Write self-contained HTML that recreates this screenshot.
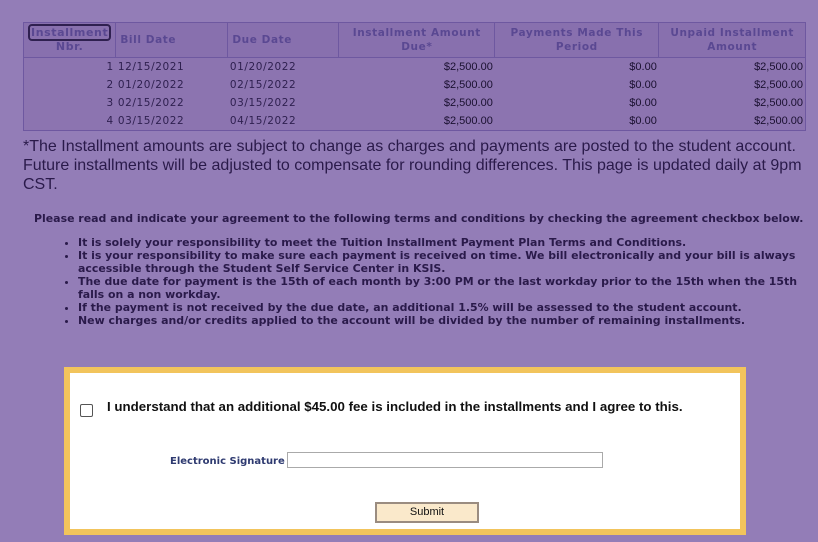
<!DOCTYPE html>
<html><head><style>
body{margin:0;width:818px;height:542px;background:#937DB7;font-family:"DejaVu Sans",Verdana,sans-serif;overflow:hidden;position:relative;color:#2a1a4a}
.t{position:absolute;left:23px;top:22px;width:783px;border-collapse:collapse;font-size:10.5px}
.t th{background:#8870AE;color:#5a4892;font-weight:bold;font-size:10.5px;letter-spacing:0.6px;border:1px solid #6e58a0;height:34px;padding:0 4px;line-height:14px}
.t td{height:18px;padding:0 2px;background:#8C74B0;color:#2f2050;letter-spacing:0.6px}
.t{border:1px solid #6e58a0}
.r{text-align:right}
.a{font-family:"Liberation Sans",Arial,sans-serif;letter-spacing:0 !important;font-size:11px;color:#1a1030 !important}
.note{position:absolute;left:23px;top:137px;width:790px;font-family:"Liberation Sans",Arial,sans-serif;font-size:16px;line-height:19px;color:#2a1a4a}
.p{position:absolute;left:34px;top:212px;font-size:10.95px;font-weight:bold;color:#2a1a4a;white-space:nowrap}
ul{position:absolute;left:60px;top:236px;margin:0;padding-left:18px;width:725px;font-size:10.95px;font-weight:bold;line-height:13px;color:#2a1a4a}
.box{position:absolute;left:64px;top:367px;width:670px;height:156px;background:#fff;border:6px solid #F2C45C}
.cb{position:absolute;left:10px;top:31px;width:11px;height:11px;border:1px solid #555;border-radius:2px}
.lbl{position:absolute;left:37px;top:26px;font-family:"Liberation Sans",Arial,sans-serif;font-weight:bold;font-size:13.3px;color:#111;white-space:nowrap}
.es{position:absolute;left:100px;top:83px;font-size:10px;font-weight:bold;color:#2e3a70}
.in{position:absolute;left:217px;top:79px;width:314px;height:14px;border:1px solid #aaa}
.btn{position:absolute;left:305px;top:129px;width:100px;height:17px;background:#FAE9CB;border:2px solid #9a8c80;font-family:"Liberation Sans",Arial,sans-serif;font-size:11px;text-align:center;line-height:17px;color:#111}
</style></head><body>
<table class="t">
<tr><th style="width:80px;font-size:11px"><span style="border:2px solid #2f2050;border-radius:4px;padding:0 1px">Installment</span><br>Nbr.</th><th style="text-align:left;width:103px">Bill Date</th><th style="text-align:left;width:102px">Due Date</th><th style="width:147px">Installment Amount Due*</th><th style="width:155px">Payments Made This Period</th><th>Unpaid Installment Amount</th></tr>
<tr><td class="r">1</td><td>12/15/2021</td><td>01/20/2022</td><td class="r a">$2,500.00</td><td class="r a">$0.00</td><td class="r a">$2,500.00</td></tr>
<tr><td class="r">2</td><td>01/20/2022</td><td>02/15/2022</td><td class="r a">$2,500.00</td><td class="r a">$0.00</td><td class="r a">$2,500.00</td></tr>
<tr><td class="r">3</td><td>02/15/2022</td><td>03/15/2022</td><td class="r a">$2,500.00</td><td class="r a">$0.00</td><td class="r a">$2,500.00</td></tr>
<tr><td class="r">4</td><td>03/15/2022</td><td>04/15/2022</td><td class="r a">$2,500.00</td><td class="r a">$0.00</td><td class="r a">$2,500.00</td></tr>
</table>
<div class="note">*The Installment amounts are subject to change as charges and payments are posted to the student account. Future installments will be adjusted to compensate for rounding differences. This page is updated daily at 9pm CST.</div>
<div class="p">Please read and indicate your agreement to the following terms and conditions by checking the agreement checkbox below.</div>
<ul>
<li>It is solely your responsibility to meet the Tuition Installment Payment Plan Terms and Conditions.</li>
<li>It is your responsibility to make sure each payment is received on time. We bill electronically and your bill is always accessible through the Student Self Service Center in KSIS.</li>
<li>The due date for payment is the 15th of each month by 3:00 PM or the last workday prior to the 15th when the 15th falls on a non workday.</li>
<li>If the payment is not received by the due date, an additional 1.5% will be assessed to the student account.</li>
<li>New charges and/or credits applied to the account will be divided by the number of remaining installments.</li>
</ul>
<div class="box">
<div class="cb"></div>
<div class="lbl">I understand that an additional $45.00 fee is included in the installments and I agree to this.</div>
<div class="es">Electronic Signature</div>
<div class="in"></div>
<div class="btn">Submit</div>
</div>
</body></html>
